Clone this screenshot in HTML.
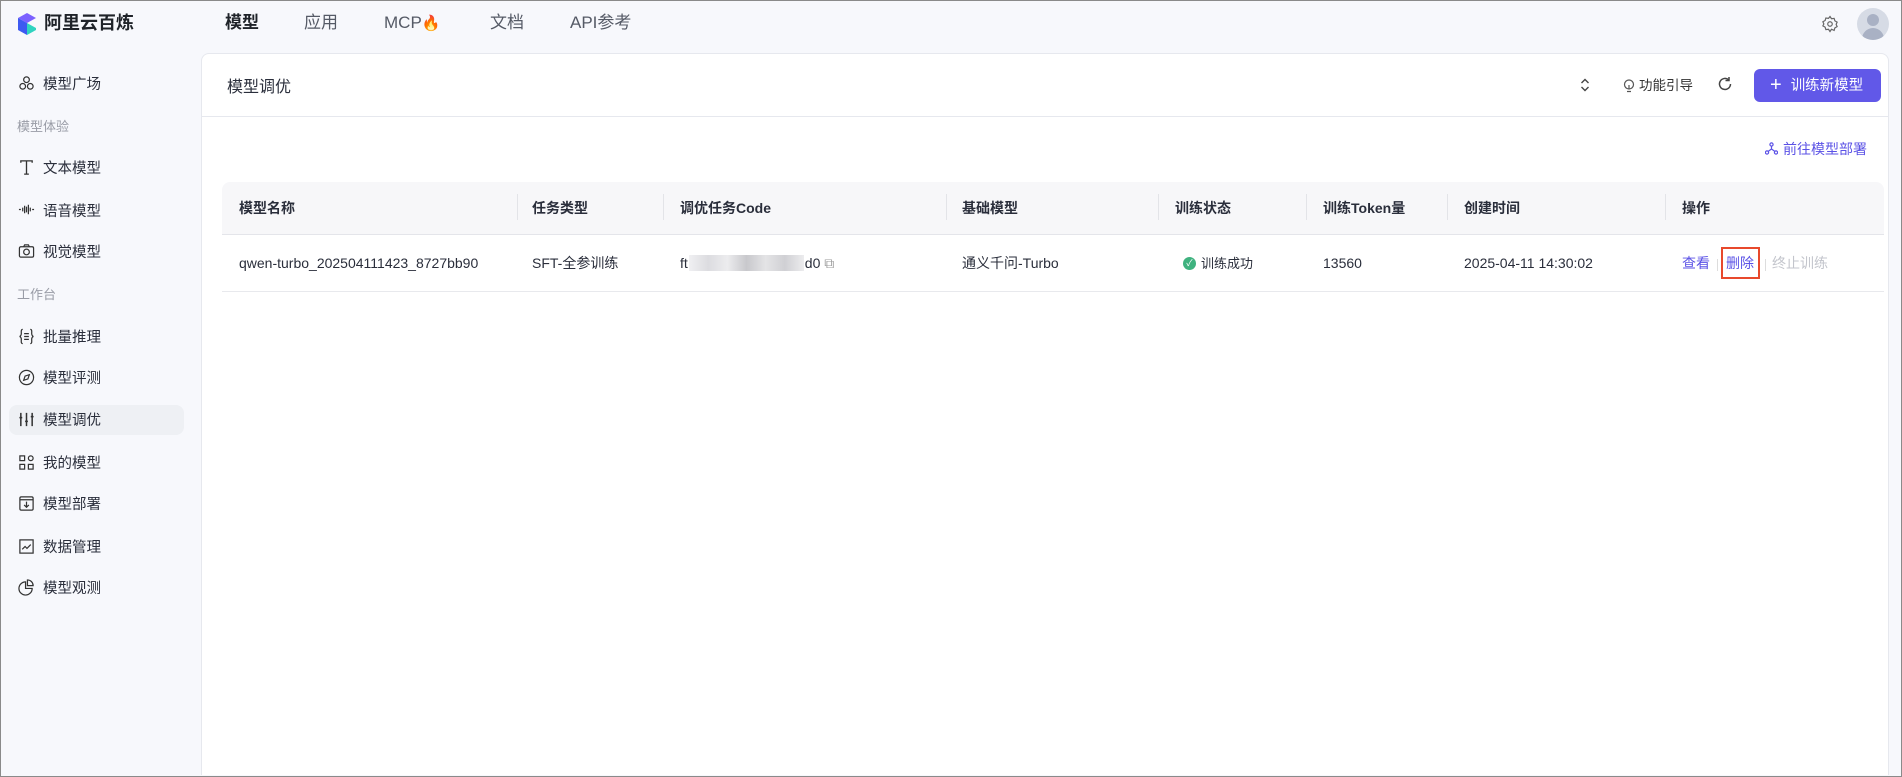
<!DOCTYPE html>
<html style="background:#fff"><head><meta charset="utf-8"><style>
*{box-sizing:border-box;margin:0;padding:0}
html,body{overflow:hidden}
body{width:1902px;height:777px;background:#f7f8fc;font-family:"Liberation Sans","Noto Sans CJK SC",sans-serif;color:#2a2e3b;position:relative;border:1px solid #8a8a8a;line-height:1.2}
.abs{position:absolute;white-space:nowrap}
.nav{top:12px;font-size:17px;color:#555a66}
.side{left:42px;font-size:14.5px;color:#2a2e3b;margin-top:3px}
.lab{left:16px;font-size:13px;color:#999ca6;margin-top:2px}
.ic{position:absolute;left:17px;width:17px;height:17px}
.card{position:absolute;left:200px;top:52px;width:1688px;height:722px;background:#fff;border:1px solid #e6e8ee;border-bottom:none;border-radius:8px 8px 0 0}
.th{font-size:14px;font-weight:bold;color:#2a2e3b;top:199px}
.td{font-size:14px;color:#2a2e3b;top:254px}
.sep{position:absolute;top:193px;width:1px;height:26px;background:#e3e4e8}
</style></head><body>
<svg class="abs" style="left:14px;top:11px" width="24" height="24" viewBox="0 0 24 24"><path d="M12 1 L21 6 L12 11 L3 6Z" fill="#7b61ff"/><path d="M3 6 L12 11 L12 23 L3 18Z" fill="#3d5af1"/><path d="M12 11 L21 16 L21 18 L12 23Z" fill="#2fd3c0"/></svg>
<div class="abs" style="left:43px;top:12px;font-size:18px;font-weight:bold;color:#1f2329">阿里云百炼</div>
<div class="abs nav" style="left:224px;color:#1f2329;font-weight:bold">模型</div>
<div class="abs nav" style="left:303px">应用</div>
<div class="abs nav" style="left:383px">MCP<span style="color:#f08a24;font-size:15px">🔥</span></div>
<div class="abs nav" style="left:489px">文档</div>
<div class="abs nav" style="left:569px">API参考</div>
<svg class="abs" style="left:1820px;top:14px" width="18" height="18" viewBox="0 0 24 24" fill="none" stroke="#666" stroke-width="1.6"><circle cx="12" cy="12" r="3"/><path d="M12 2l2 3 3.5-.5 1 3.3 3 1.7-1.3 3 1.3 3-3 1.7-1 3.3L14 19l-2 3-2-3-3.5.5-1-3.3-3-1.7L3.8 12 2.5 9l3-1.7 1-3.3L10 4.5z"/></svg>
<div class="abs" style="left:1856px;top:7px;width:32px;height:32px;border-radius:50%;background:#d6dbe5;overflow:hidden"><div style="position:absolute;left:10px;top:6px;width:12px;height:12px;border-radius:50%;background:#a9b1c4"></div><div style="position:absolute;left:5px;top:20px;width:22px;height:16px;border-radius:11px 11px 0 0;background:#a9b1c4"></div></div>

<svg class="ic" style="top:74px" viewBox="0 0 18 18" fill="none" stroke="#333" stroke-width="1.3"><circle cx="9" cy="5" r="3"/><circle cx="5" cy="12" r="3"/><circle cx="13" cy="12" r="3"/></svg>
<div class="abs side" style="top:73px">模型广场</div>
<div class="abs lab" style="top:116px">模型体验</div>
<svg class="ic" style="top:158px" viewBox="0 0 18 18" fill="none" stroke="#333" stroke-width="1.4"><path d="M3 4V2h12v2M9 2v14M6.5 16h5"/></svg>
<div class="abs side" style="top:157px">文本模型</div>
<svg class="ic" style="top:200px" viewBox="0 0 18 18" fill="none" stroke="#333" stroke-width="1.3"><path d="M1 9h2M15 9h2M5 7v4M7 5v8M9 6v6M11 4v10M13 7v4"/></svg>
<div class="abs side" style="top:200px">语音模型</div>
<svg class="ic" style="top:242px" viewBox="0 0 18 18" fill="none" stroke="#333" stroke-width="1.3"><rect x="1.5" y="4" width="15" height="11" rx="1.5"/><circle cx="9" cy="9.5" r="3"/><path d="M6 4l1-2h4l1 2"/></svg>
<div class="abs side" style="top:241px">视觉模型</div>
<div class="abs lab" style="top:284px">工作台</div>
<svg class="ic" style="top:327px" viewBox="0 0 18 18" fill="none" stroke="#333" stroke-width="1.3"><path d="M5 1.5C3 1.5 3.5 4 3.5 6S2 9 1.5 9c.5 0 2 .5 2 3s-.5 4.5 1.5 4.5M13 1.5c2 0 1.5 2.5 1.5 4.5S16 9 16.5 9c-.5 0-2 .5-2 3s.5 4.5-1.5 4.5M6.5 6h5M6.5 9h5M6.5 12h5"/></svg>
<div class="abs side" style="top:326px">批量推理</div>
<svg class="ic" style="top:368px" viewBox="0 0 18 18" fill="none" stroke="#333" stroke-width="1.3"><circle cx="9" cy="9" r="7.5"/><path d="M12 6L7.5 7.5 6 12l4.5-1.5z"/></svg>
<div class="abs side" style="top:367px">模型评测</div>
<div class="abs" style="left:8px;top:404px;width:175px;height:30px;background:#eef0f4;border-radius:8px"></div>
<svg class="ic" style="top:410px" viewBox="0 0 18 18" fill="none" stroke="#333" stroke-width="1.6"><path d="M3 2v14M9 2v14M15 2v14"/><path d="M1.5 7h3M7.5 11h3M13.5 6h3"/></svg>
<div class="abs side" style="top:409px">模型调优</div>
<svg class="ic" style="top:453px" viewBox="0 0 18 18" fill="none" stroke="#333" stroke-width="1.3"><rect x="2" y="2" width="5" height="5"/><rect x="2" y="11" width="5" height="5"/><rect x="11" y="11" width="5" height="5"/><circle cx="13.5" cy="4.5" r="2.5"/></svg>
<div class="abs side" style="top:452px">我的模型</div>
<svg class="ic" style="top:494px" viewBox="0 0 18 18" fill="none" stroke="#333" stroke-width="1.3"><rect x="2" y="2" width="14" height="14" rx="1.5"/><path d="M2 5h14M9 7v6M6.5 10.5L9 13l2.5-2.5"/></svg>
<div class="abs side" style="top:493px">模型部署</div>
<svg class="ic" style="top:537px" viewBox="0 0 18 18" fill="none" stroke="#333" stroke-width="1.3"><rect x="2" y="2" width="14" height="14"/><path d="M4.5 12l3-3 2 2 4-4"/></svg>
<div class="abs side" style="top:536px">数据管理</div>
<svg class="ic" style="top:578px" viewBox="0 0 18 18" fill="none" stroke="#333" stroke-width="1.3"><path d="M8 3a7 7 0 1 0 7 7H8z"/><path d="M10 1v6h6a6 6 0 0 0-6-6z"/></svg>
<div class="abs side" style="top:577px">模型观测</div>

<div class="card"></div>
<div class="abs" style="left:226px;top:77px;font-size:16px;color:#2a2e3b">模型调优</div>
<div class="abs" style="left:201px;top:115px;width:1686px;height:1px;background:#e6e8ee"></div>
<svg class="abs" style="left:1578px;top:76px" width="12" height="16" viewBox="0 0 12 16" fill="none" stroke="#444" stroke-width="1.4"><path d="M2.5 6L6 2.5 9.5 6M2.5 10L6 13.5 9.5 10"/></svg>
<svg class="abs" style="left:1622px;top:78px" width="12" height="14" viewBox="0 0 12 14" fill="none" stroke="#555" stroke-width="1.2"><circle cx="6" cy="5.5" r="4.5"/><path d="M4 12.5h4M6 6v4"/></svg>
<div class="abs" style="left:1638px;top:77px;font-size:13.5px;color:#333">功能引导</div>
<svg class="abs" style="left:1716px;top:75px" width="16" height="16" viewBox="0 0 16 16" fill="none" stroke="#444" stroke-width="1.5"><path d="M13.5 8A5.5 5.5 0 1 1 11.5 3.7"/><path d="M12 1v3.5H8.5"/></svg>
<div class="abs" style="left:1753px;top:68px;width:127px;height:33px;background:#6158e8;border-radius:6px;color:#fff;font-size:14.5px;line-height:33px;padding-left:16px"><span style="font-size:20px;vertical-align:-1px;margin-right:9px">+</span>训练新模型</div>
<svg class="abs" style="left:1764px;top:141px" width="13" height="13" viewBox="0 0 13 13" fill="none" stroke="#5b52e6" stroke-width="1.2"><circle cx="6.5" cy="2.5" r="1.6"/><circle cx="2" cy="10.5" r="1.6"/><circle cx="11" cy="10.5" r="1.6"/><path d="M6.5 4.1v3M6.5 7L3 9.5M6.5 7l3.5 2.5"/></svg>
<div class="abs" style="left:1782px;top:140px;font-size:14px;color:#5b52e6">前往模型部署</div>

<div class="abs" style="left:221px;top:181px;width:1662px;height:53px;background:#f7f7f9;border-radius:8px 8px 0 0;border-bottom:1px solid #e4e5ea"></div>
<div class="abs" style="left:221px;top:290px;width:1662px;height:1px;background:#e8e9ed"></div>
<div class="sep" style="left:516px"></div><div class="sep" style="left:662px"></div><div class="sep" style="left:945px"></div><div class="sep" style="left:1157px"></div><div class="sep" style="left:1305px"></div><div class="sep" style="left:1446px"></div><div class="sep" style="left:1664px"></div>
<div class="abs th" style="left:238px">模型名称</div>
<div class="abs th" style="left:531px">任务类型</div>
<div class="abs th" style="left:679px">调优任务Code</div>
<div class="abs th" style="left:961px">基础模型</div>
<div class="abs th" style="left:1174px">训练状态</div>
<div class="abs th" style="left:1322px">训练Token量</div>
<div class="abs th" style="left:1463px">创建时间</div>
<div class="abs th" style="left:1681px">操作</div>
<div class="abs td" style="left:238px">qwen-turbo_202504111423_8727bb90</div>
<div class="abs td" style="left:531px">SFT-全参训练</div>
<div class="abs td" style="left:679px">ft<span style="display:inline-block;width:115px;height:16px;background:linear-gradient(90deg,#f0f0f2,#dcdce0,#ececee,#c8c8cc,#e4e4e6,#d0d0d4,#ececee);vertical-align:-3px;margin:0 1px"></span>d0 <span style="color:#999">⧉</span></div>
<div class="abs td" style="left:961px">通义千问-Turbo</div>
<div class="abs" style="left:1182px;top:256px;width:13px;height:13px;border-radius:50%;background:#3fb27f;color:#fff;font-size:9px;line-height:13px;text-align:center">✓</div>
<div class="abs td" style="left:1200px;font-size:13px;top:255px">训练成功</div>
<div class="abs td" style="left:1322px">13560</div>
<div class="abs td" style="left:1463px">2025-04-11 14:30:02</div>
<div class="abs td" style="left:1681px;color:#5b52e6">查看</div>
<div class="abs" style="left:1716px;top:258px;width:1px;height:12px;background:#ddd"></div>
<div class="abs td" style="left:1725px;color:#5b52e6">删除</div>
<div class="abs" style="left:1720px;top:246px;width:39px;height:32px;border:2px solid #e8492c"></div>
<div class="abs" style="left:1764px;top:258px;width:1px;height:12px;background:#ddd"></div>
<div class="abs td" style="left:1771px;color:#c3c5cc">终止训练</div>
</body></html>
